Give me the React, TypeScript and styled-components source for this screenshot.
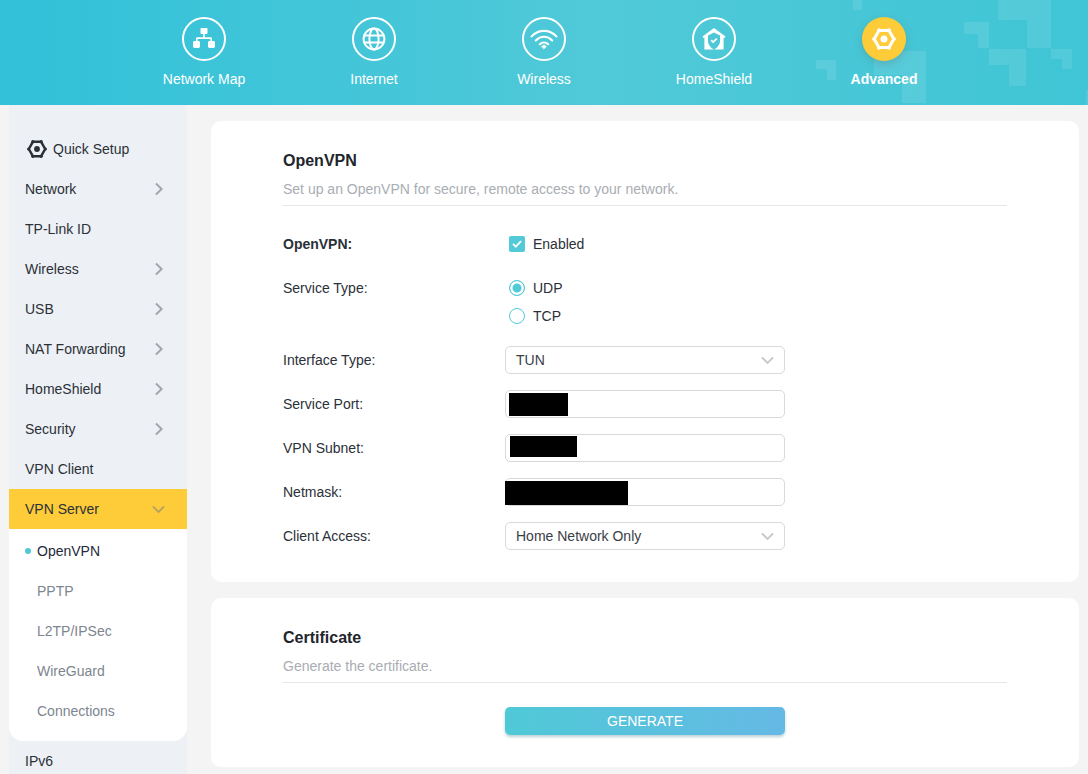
import {ReactNode} from 'react'
import styled, {createGlobalStyle} from 'styled-components'

const GlobalStyle = createGlobalStyle`
  html, body {
    margin: 0;
    height: 100%;
    overflow: hidden;
    background: #f4f4f4;
    font-family: "Liberation Sans", Arial, sans-serif;
    font-size: 14px;
    color: #2b3038;
  }
`

function NetworkMapIcon() {
  return (
    <svg width="24" height="24" viewBox="0 0 24 24" fill="#fff">
      <rect x="8.5" y="1" width="7" height="6" rx="1" />
      <rect x="11.2" y="6" width="1.6" height="5" />
      <path d="M4 15v-3.2c0-.9.6-1.5 1.5-1.5h13c.9 0 1.5.6 1.5 1.5V15h-1.6v-3.1H5.6V15z" />
      <rect x="1" y="14" width="7" height="7" rx="1.4" />
      <rect x="16" y="14" width="7" height="7" rx="1.4" />
    </svg>
  )
}

function GlobeIcon() {
  return (
    <svg width="24" height="24" viewBox="0 0 24 24" fill="none" stroke="#fff" strokeWidth="2">
      <circle cx="12" cy="12" r="10.4" />
      <ellipse cx="12" cy="12" rx="4.6" ry="10.4" />
      <path d="M1.6 8.6h20.8M1.6 15.4h20.8" />
    </svg>
  )
}

function WifiIcon() {
  return (
    <svg width="28" height="24" viewBox="0 0 28 24" fill="none" stroke="#fff" strokeWidth="2.1" strokeLinecap="round">
      <path d="M1.6 9.4C8.6 2 19.4 2 26.4 9.4" />
      <path d="M5.8 13.4C10.6 8.6 17.4 8.6 22.2 13.4" />
      <path d="M9.8 17.2C12.2 15 15.8 15 18.2 17.2" />
      <path d="M11.6 19.6 14 17.8l2.4 1.8L14 21.8z" fill="#fff" strokeWidth="0.6" />
    </svg>
  )
}

function HomeShieldIcon() {
  return (
    <svg width="24" height="24" viewBox="0 0 24 24">
      <path
        fill="#fff"
        fillRule="evenodd"
        d="M12 1 23.5 9.4 22.4 11H21.6V22.6H2.4V11H1.6L.5 9.4zM12 5.6 6 8.6V14.2C6 17.2 8.6 20.6 12 22.6 15.4 20.6 18 17.2 18 14.2V8.6z"
      />
      <path fill="none" stroke="#fff" strokeWidth="1.8" strokeLinejoin="round" d="M9.2 13.2 11.2 15.2 14.8 11.6" />
    </svg>
  )
}

function HexGearIcon({color, size}: {color: string; size: number}) {
  return (
    <svg width={size} height={size} viewBox="0 0 24 24">
      <path
        fill="none"
        stroke={color}
        strokeWidth="3"
        strokeLinejoin="round"
        d="M7 3.4h10L21.8 12 17 20.6H7L2.2 12z"
      />
      <circle cx="7" cy="3.2" r="2" fill={color} />
      <circle cx="17" cy="3.2" r="2" fill={color} />
      <circle cx="7" cy="20.8" r="2" fill={color} />
      <circle cx="17" cy="20.8" r="2" fill={color} />
      <circle cx="1.9" cy="12" r="1.8" fill={color} />
      <circle cx="22.1" cy="12" r="1.8" fill={color} />
      <circle cx="12" cy="12" r="3.5" fill={color} />
    </svg>
  )
}

function ChevronRight() {
  return (
    <svg width="10" height="14" viewBox="0 0 10 14" fill="none" stroke="#a3a7ad" strokeWidth="2">
      <path d="M1 1.5 6.6 7 1 12.5" />
    </svg>
  )
}

function ChevronDown({color}: {color: string}) {
  return (
    <svg width="13" height="9" viewBox="0 0 13 9" fill="none" stroke={color} strokeWidth="1.8">
      <path d="M1 1.5 6.5 7 12 1.5" />
    </svg>
  )
}

function HeaderPattern() {
  const shapes = [
    'M853 0h9v10h-9z',
    'M998 0h53v48h-24V20h-29z',
    'M964 22h25v26h-11V34h-14z',
    'M989 49h37v37h-17V65h-20z',
    'M1051 49h21v20h-10V59h-11z',
    'M816 60h20v20h-9V69h-11z',
    'M874 51h52v52h-24V75h-28z',
    'M1086 90h2v15h-2z',
  ]
  return (
    <Pattern width="1088" height="105" viewBox="0 0 1088 105">
      {shapes.map(d => (
        <path key={d} d={d} fill="#fff" fillOpacity="0.1" />
      ))}
    </Pattern>
  )
}

const navItems: {label: string; icon: ReactNode; active?: boolean}[] = [
  {label: 'Network Map', icon: <NetworkMapIcon />},
  {label: 'Internet', icon: <GlobeIcon />},
  {label: 'Wireless', icon: <WifiIcon />},
  {label: 'HomeShield', icon: <HomeShieldIcon />},
  {label: 'Advanced', icon: <HexGearIcon color="#fff" size={24} />, active: true},
]

const menuTop = [
  {label: 'Network', more: true},
  {label: 'TP-Link ID'},
  {label: 'Wireless', more: true},
  {label: 'USB', more: true},
  {label: 'NAT Forwarding', more: true},
  {label: 'HomeShield', more: true},
  {label: 'Security', more: true},
  {label: 'VPN Client'},
]

const subMenu = ['OpenVPN', 'PPTP', 'L2TP/IPSec', 'WireGuard', 'Connections']

export default function App() {
  return (
    <>
      <GlobalStyle />
      <Page>
        <Header>
          <HeaderPattern />
          <TopNav>
            {navItems.map(item => (
              <NavItem key={item.label}>
                <NavCircle $active={item.active}>{item.icon}</NavCircle>
                <NavLabel $active={item.active}>{item.label}</NavLabel>
              </NavItem>
            ))}
          </TopNav>
        </Header>
        <Body>
          <Sidebar>
            <MenuRow $setup>
              <HexGearIcon color="#2b3038" size={20} />
              <span>Quick Setup</span>
            </MenuRow>
            {menuTop.map(item => (
              <MenuRow key={item.label}>
                <span>{item.label}</span>
                {item.more && <ChevronRight />}
              </MenuRow>
            ))}
            <MenuRow $open>
              <span>VPN Server</span>
              <ChevronDown color="#b6a262" />
            </MenuRow>
            <SubMenu>
              {subMenu.map((label, i) => (
                <SubRow key={label} $active={i === 0}>
                  {label}
                </SubRow>
              ))}
            </SubMenu>
            <MenuRow>
              <span>IPv6</span>
            </MenuRow>
          </Sidebar>
          <Main>
            <Card>
              <CardTitle>OpenVPN</CardTitle>
              <CardHint>Set up an OpenVPN for secure, remote access to your network.</CardHint>
              <Form>
                <FormRow>
                  <FieldLabel $strong>OpenVPN:</FieldLabel>
                  <Choice>
                    <Checkbox>
                      <svg width="10" height="8" viewBox="0 0 10 8" fill="none" stroke="#fff" strokeWidth="1.8">
                        <path d="M1 3.8 3.8 6.6 9 1.2" />
                      </svg>
                    </Checkbox>
                    Enabled
                  </Choice>
                </FormRow>
                <RadioRow>
                  <FieldLabel>Service Type:</FieldLabel>
                  <RadioList>
                    <Choice>
                      <Radio $checked />
                      UDP
                    </Choice>
                    <Choice>
                      <Radio />
                      TCP
                    </Choice>
                  </RadioList>
                </RadioRow>
                <FormRow>
                  <FieldLabel>Interface Type:</FieldLabel>
                  <Field>
                    TUN
                    <ChevronDown color="#c6c8cc" />
                  </Field>
                </FormRow>
                <FormRow>
                  <FieldLabel>Service Port:</FieldLabel>
                  <Field>
                    <Redaction $left={4} $top={3} $width={59} $height={23} />
                  </Field>
                </FormRow>
                <FormRow>
                  <FieldLabel>VPN Subnet:</FieldLabel>
                  <Field>
                    <Redaction $left={5} $top={2} $width={67} $height={21} />
                  </Field>
                </FormRow>
                <FormRow>
                  <FieldLabel>Netmask:</FieldLabel>
                  <Field>
                    <Redaction $left={0} $top={3} $width={123} $height={24} />
                  </Field>
                </FormRow>
                <FormRow>
                  <FieldLabel>Client Access:</FieldLabel>
                  <Field>
                    Home Network Only
                    <ChevronDown color="#c6c8cc" />
                  </Field>
                </FormRow>
              </Form>
            </Card>
            <CertCard>
              <CardTitle>Certificate</CardTitle>
              <CardHint>Generate the certificate.</CardHint>
              <ButtonRow>
                <GenerateButton>GENERATE</GenerateButton>
              </ButtonRow>
            </CertCard>
          </Main>
        </Body>
      </Page>
    </>
  )
}

const Page = styled.div`
  width: 1088px;
  height: 774px;
  overflow: hidden;
  background: #f4f4f4;
`

const Header = styled.header`
  position: relative;
  height: 105px;
  background: linear-gradient(90deg, #31c1d9 0%, #50c9d8 55%, #3fc5d5 100%);
`

const Pattern = styled.svg`
  position: absolute;
  inset: 0;
`

const TopNav = styled.nav`
  position: relative;
  display: flex;
  padding: 17px 0 0 119px;
`

const NavItem = styled.div`
  width: 170px;
  display: flex;
  flex-direction: column;
  align-items: center;
`

const NavCircle = styled.div<{$active?: boolean}>`
  width: 44px;
  height: 44px;
  box-sizing: border-box;
  border-radius: 50%;
  display: flex;
  align-items: center;
  justify-content: center;
  border: ${p => (p.$active ? 'none' : '2px solid #fff')};
  background: ${p => (p.$active ? '#fdcc38' : 'transparent')};
  box-shadow: ${p => (p.$active ? '0 3px 8px rgba(90, 110, 110, 0.3)' : 'none')};
`

const NavLabel = styled.div<{$active?: boolean}>`
  margin-top: 10px;
  line-height: 16px;
  color: #fff;
  font-weight: ${p => (p.$active ? 700 : 400)};
`

const Body = styled.div`
  display: flex;
  align-items: flex-start;
  padding-left: 9px;
`

const Sidebar = styled.aside`
  width: 178px;
  flex: none;
  padding-top: 24px;
  background: #edf0f5;
`

const MenuRow = styled.div<{$open?: boolean; $setup?: boolean}>`
  height: 40px;
  box-sizing: border-box;
  display: flex;
  align-items: center;
  justify-content: ${p => (p.$setup ? 'flex-start' : 'space-between')};
  gap: ${p => (p.$setup ? '6px' : '0')};
  padding: ${p => (p.$setup ? '0 0 0 18px' : '0 22px 0 16px')};
  background: ${p => (p.$open ? '#fdcc38' : 'transparent')};
  color: #2b3038;
`

const SubMenu = styled.div`
  padding: 2px 0 10px;
  background: #fff;
  border-radius: 0 0 14px 14px;
`

const SubRow = styled.div<{$active?: boolean}>`
  position: relative;
  height: 40px;
  line-height: 40px;
  padding-left: 28px;
  color: ${p => (p.$active ? '#1f2a3a' : '#7d8590')};

  &::before {
    content: '';
    display: ${p => (p.$active ? 'block' : 'none')};
    position: absolute;
    left: 16px;
    top: 17px;
    width: 6px;
    height: 6px;
    border-radius: 50%;
    background: #4fc9d8;
  }
`

const Main = styled.main`
  flex: 1;
  display: flex;
  flex-direction: column;
  gap: 16px;
  padding: 16px 9px 0 24px;
`

const Card = styled.section`
  height: 461px;
  box-sizing: border-box;
  padding: 30px 72px 0;
  background: #fff;
  border-radius: 10px;
`

const CertCard = styled(Card)`
  height: 169px;
`

const CardTitle = styled.h2`
  margin: 0;
  font-size: 16px;
  line-height: 20px;
  font-weight: 700;
  color: #22262c;
`

const CardHint = styled.p`
  margin: 10px 0 0;
  padding-bottom: 8px;
  line-height: 16px;
  color: #a9adb3;
  border-bottom: 1px solid #e4e6e9;
`

const Form = styled.div`
  margin-top: 16px;
`

const FormRow = styled.div`
  display: grid;
  grid-template-columns: 222px 280px;
  align-items: center;
  height: 44px;
`

const RadioRow = styled(FormRow)`
  height: 72px;
  align-items: start;
  padding-top: 8px;
  box-sizing: border-box;
`

const FieldLabel = styled.div<{$strong?: boolean}>`
  line-height: 28px;
  color: #2b3038;
  font-weight: ${p => (p.$strong ? 700 : 400)};
`

const RadioList = styled.div`
  display: flex;
  flex-direction: column;
`

const Choice = styled.div`
  display: flex;
  align-items: center;
  gap: 8px;
  height: 28px;
  padding-left: 4px;
  color: #2b3038;
`

const Checkbox = styled.span`
  width: 16px;
  height: 16px;
  border-radius: 2px;
  background: #52cad8;
  display: flex;
  align-items: center;
  justify-content: center;
`

const Radio = styled.span<{$checked?: boolean}>`
  width: 16px;
  height: 16px;
  box-sizing: border-box;
  border-radius: 50%;
  border: 1px solid #52cad8;
  background: ${p => (p.$checked ? '#52cad8' : '#fff')};
  box-shadow: ${p => (p.$checked ? 'inset 0 0 0 2.5px #fff' : 'none')};
`

const Field = styled.div`
  position: relative;
  height: 28px;
  box-sizing: border-box;
  display: flex;
  align-items: center;
  justify-content: space-between;
  padding: 0 10px;
  border: 1px solid #d8d9dc;
  border-radius: 5px;
  background: #fff;
  color: #3a4048;
`

const Redaction = styled.div<{$left: number; $top: number; $width: number; $height: number}>`
  position: absolute;
  left: ${p => p.$left - 1}px;
  top: ${p => p.$top - 1}px;
  width: ${p => p.$width}px;
  height: ${p => p.$height}px;
  background: #000;
`

const ButtonRow = styled.div`
  margin-top: 24px;
  padding-left: 222px;
`

const GenerateButton = styled.button`
  display: block;
  width: 280px;
  height: 28px;
  padding: 0;
  border: none;
  border-radius: 5px;
  background: linear-gradient(90deg, #4fc9d6 0%, #65b9e5 100%);
  box-shadow: 0 2px 3px rgba(60, 120, 140, 0.35);
  color: #fff;
  font-family: inherit;
  font-size: 14px;
`
